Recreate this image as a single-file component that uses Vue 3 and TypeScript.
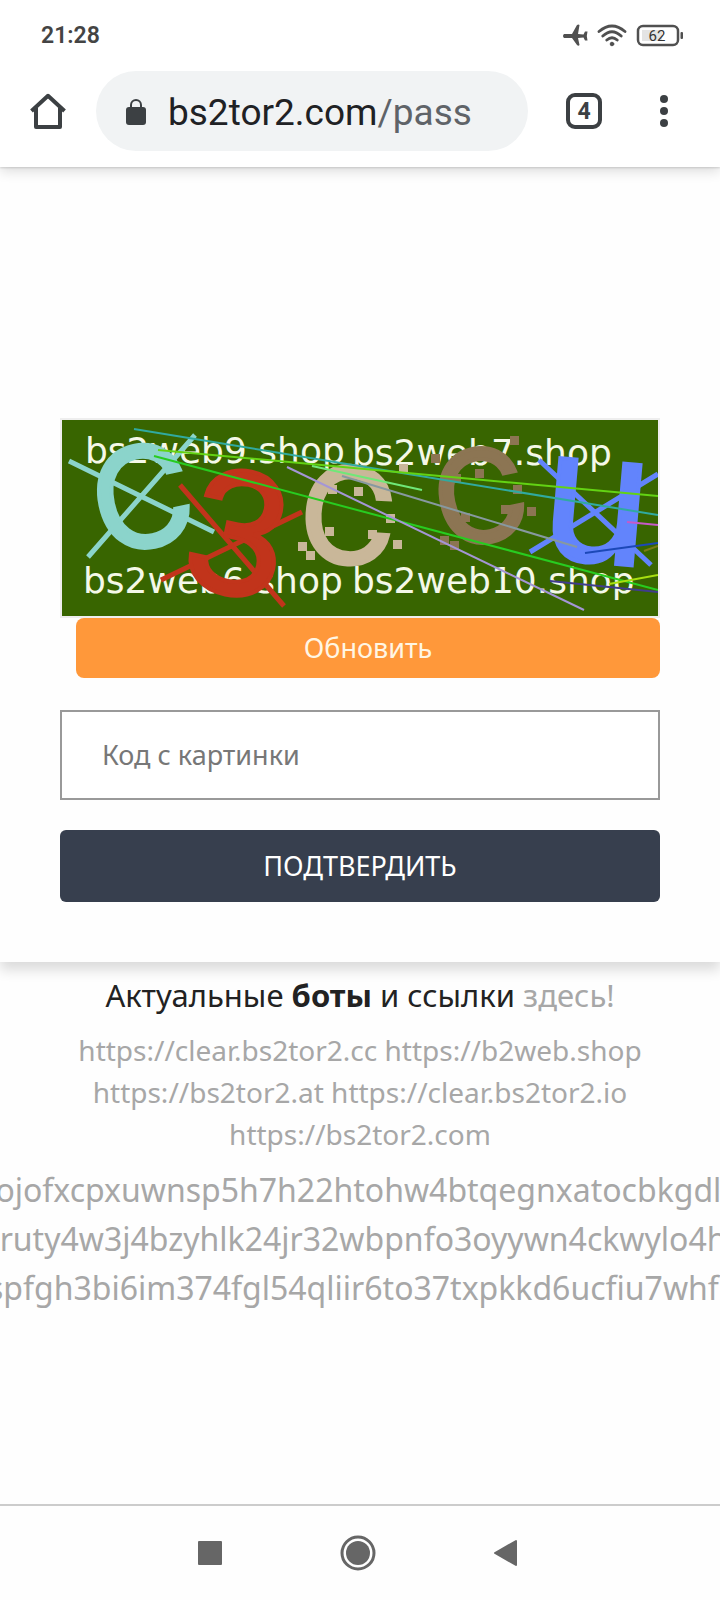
<script setup lang="ts">
import { ref } from 'vue'

interface Segment {
  from: [number, number]
  to: [number, number]
  color: string
}

const code = ref('')

const mirrors: string[] = [
  'https://clear.bs2tor2.cc',
  'https://b2web.shop',
  'https://bs2tor2.at',
  'https://clear.bs2tor2.io',
  'https://bs2tor2.com',
]

const onions: string[] = [
  'lojofxcpxuwnsp5h7h22htohw4btqegnxatocbkgdlt',
  'oruty4w3j4bzyhlk24jr32wbpnfo3oyywn4ckwylo4hr',
  'spfgh3bi6im374fgl54qliir6to37txpkkd6ucfiu7whfr',
]

const noise: Segment[] = [
  { from: [72, 9], to: [596, 95], color: '#30aaa0' },
  { from: [96, 30], to: [596, 76], color: '#63d313' },
  { from: [92, 36], to: [596, 170], color: '#28cc20' },
  { from: [250, 46], to: [360, 70], color: '#6fe878' },
  { from: [225, 47], to: [522, 190], color: '#a496d6' },
  { from: [280, 56], to: [515, 127], color: '#8799a0' },
  { from: [565, 102], to: [596, 105], color: '#c65ac8' },
  { from: [523, 133], to: [596, 123], color: '#1c48b8' },
  { from: [582, 131], to: [596, 126], color: '#7c7a14' },
  { from: [547, 164], to: [596, 155], color: '#a8e010' },
  { from: [488, 161], to: [596, 172], color: '#403c8c' },
]

const tanSpecks: [number, number][] = [
  [270, 69], [296, 71], [341, 48], [328, 98], [267, 111],
  [310, 114], [335, 124], [240, 126], [248, 135],
]
const brownSpecks: [number, number][] = [
  [452, 20], [373, 38], [394, 58], [417, 53], [455, 69],
  [443, 89], [469, 91], [403, 97], [382, 120], [392, 125],
]
</script>

<template>
  <div class="screen">
    <header class="browser">
      <div class="status">
        <time>21:28</time>
        <div class="indicators">
          <svg width="26" height="24" viewBox="0 0 26 24" aria-label="Авиарежим">
            <path d="M2 10H10L15 1Q16.500 0 17.500 1L16 10L21.500 10.500L23 7.500H25.500L24.800 12L25.500 16.500H23L21.500 13.500L16 14L17.500 21Q16.500 22.500 15 21L10 14H2Q0 12 2 10Z" fill="#505050" />
          </svg>
          <svg width="30" height="24" viewBox="0 0 30 24" fill="none" stroke="#505050" stroke-width="2.800" stroke-linecap="round" aria-label="Wi-Fi">
            <path d="M2 7.500Q15 -3.500 28 7.500M5.800 12Q15 3.500 24.200 12M9.800 16Q15 11.500 20.200 16" />
            <circle cx="15" cy="20" r="1.800" fill="#505050" stroke-width="1" />
          </svg>
          <svg width="48" height="24" viewBox="0 0 48 24" aria-label="Батарея">
            <rect x="2" y="2" width="40" height="19" rx="5" fill="#fff" stroke="#505050" stroke-width="2.500" />
            <rect x="6" y="6" width="20" height="11" fill="#e4e4e4" />
            <rect x="44.500" y="8" width="2.500" height="7" rx="1" fill="#505050" />
            <text x="21" y="17" text-anchor="middle" font-family="Roboto, sans-serif" font-size="15" font-weight="400" fill="#333">62</text>
          </svg>
        </div>
      </div>
      <div class="toolbar">
        <button class="tool home" type="button" aria-label="Домой">
          <svg width="40" height="40" viewBox="0 0 40 40" fill="none" stroke="#3c4043" stroke-width="4" stroke-linejoin="round">
            <path d="M3.500 20L20 4.800L36.500 20" />
            <path d="M8 17V36H32V17" />
          </svg>
        </button>
        <a class="address" href="#">
          <svg width="20" height="28" viewBox="0 0 20 28">
            <rect y="9" width="20" height="18" rx="3" fill="#3c4043" />
            <path d="M5 10V7A5 5 0 0 1 15 7V10" fill="none" stroke="#3c4043" stroke-width="2" />
          </svg>
          <span class="url">bs2tor2.com<span class="path">/pass</span></span>
        </a>
        <button class="tool tabs" type="button" aria-label="Вкладки"><span class="count">4</span></button>
        <button class="tool menu" type="button" aria-label="Меню">
          <svg width="8" height="32" viewBox="0 0 8 32" fill="#3c4043">
            <circle cx="4" cy="4" r="4" /><circle cx="4" cy="16" r="4" /><circle cx="4" cy="28" r="4" />
          </svg>
        </button>
      </div>
    </header>

    <main>
      <form class="card" @submit.prevent>
        <svg class="captcha" viewBox="0 0 596 196" role="img" aria-label="Картинка с кодом">
          <rect width="596" height="196" fill="#386500" />
          <g class="stamp">
            <text x="23" y="43">bs2web9.shop</text>
            <text x="290" y="45">bs2web7.shop</text>
            <text x="21" y="173">bs2web6.shop</text>
            <text x="290" y="173">bs2web10.shop</text>
          </g>
          <path d="M7 41L152 112M133 15L26 137" stroke="#8bd4cb" stroke-width="5" />
          <path d="M118 65L222 186M99 160L240 92" stroke="#c1341b" stroke-width="5" />
          <path d="M477 40L589 145M468 132L596 54" stroke="#6284fc" stroke-width="5" />
          <g class="sign">
            <text transform="translate(80 77) rotate(-12)" y="50" font-size="138" fill="#8bd4cb" stroke="#8bd4cb">C</text>
            <text transform="translate(176 113) rotate(12)" y="61" font-size="168" fill="#c1341b" stroke="#c1341b">3</text>
            <text transform="translate(286 95) rotate(3)" y="48" font-size="132" fill="#c9b799" stroke="#c9b799">C</text>
            <text transform="translate(418 76) rotate(-12)" y="46" font-size="127" fill="#8c7553" stroke="#8c7553">C</text>
            <text transform="translate(534 92) rotate(5)" y="50" font-size="184" fill="#6284fc" stroke="#6284fc">u</text>
          </g>
          <rect v-for="([x, y], i) in tanSpecks" :key="'t' + i" :x="x - 4" :y="y - 4" width="9" height="9" fill="#c9b799" />
          <rect v-for="([x, y], i) in brownSpecks" :key="'b' + i" :x="x - 4" :y="y - 4" width="9" height="9" fill="#8c7553" />
          <line
            v-for="(s, i) in noise"
            :key="'n' + i"
            :x1="s.from[0]"
            :y1="s.from[1]"
            :x2="s.to[0]"
            :y2="s.to[1]"
            :stroke="s.color"
            stroke-width="2"
          />
        </svg>
        <button class="refresh" type="button">Обновить</button>
        <input v-model="code" class="code" type="text" placeholder="Код с картинки" aria-label="Код с картинки" autocomplete="off" />
        <button class="submit" type="submit">ПОДТВЕРДИТЬ</button>
      </form>

      <section class="links">
        <h1>Актуальные <b>боты</b> и ссылки <a href="#">здесь!</a></h1>
        <p class="mirrors">
          <template v-for="m in mirrors" :key="m"><a :href="m">{{ m }}</a>{{ ' ' }}</template>
        </p>
        <div class="onions">
          <a v-for="o in onions" :key="o" href="#">{{ o }}</a>
        </div>
      </section>
    </main>

    <nav class="system">
      <button type="button" aria-label="Недавние">
        <svg width="36" height="36" viewBox="0 0 36 36"><rect x="6" y="6" width="24" height="24" rx="1" fill="#666" /></svg>
      </button>
      <button type="button" aria-label="Главный экран">
        <svg width="36" height="36" viewBox="0 0 36 36">
          <circle cx="18" cy="18" r="16" fill="none" stroke="#666" stroke-width="3" />
          <circle cx="18" cy="18" r="12" fill="#666" />
        </svg>
      </button>
      <button type="button" aria-label="Назад">
        <svg width="36" height="36" viewBox="0 0 36 36">
          <path d="M7 18L28 6V30Z" fill="#666" stroke="#666" stroke-width="2" stroke-linejoin="round" />
        </svg>
      </button>
    </nav>
  </div>
</template>

<style>
body {
  background: #fefefe;
}
</style>

<style scoped>
.screen {
  display: flex;
  flex-direction: column;
  min-height: 100vh;
  overflow: hidden;
  background: #fefefe;
  font-family: "Noto Sans", "Open Sans", sans-serif;
}
.screen * {
  box-sizing: border-box;
}
button {
  padding: 0;
  border: 0;
  background: none;
  font-family: inherit;
}
a {
  color: #a7a7a7;
  text-decoration: none;
}
svg {
  display: block;
}
.browser {
  position: relative;
  z-index: 1;
  padding-bottom: 16px;
  background: #fff;
  box-shadow: 0 1px 2px rgba(0, 0, 0, 0.14), 0 4px 12px rgba(0, 0, 0, 0.14);
  font-family: Roboto, sans-serif;
}
.status {
  display: flex;
  align-items: center;
  justify-content: space-between;
  height: 71px;
  padding: 0 36px 0 41px;
  color: #444;
  font-size: 23px;
  font-weight: 600;
}
.indicators {
  display: flex;
  gap: 9px;
}
.toolbar {
  display: flex;
  align-items: center;
  padding-right: 32px;
}
.tool {
  display: flex;
  align-items: center;
  justify-content: center;
  height: 80px;
}
.home {
  width: 96px;
}
.tabs {
  width: 112px;
}
.menu {
  width: 48px;
}
.count {
  width: 36px;
  height: 36px;
  border: 4px solid #3c4043;
  border-radius: 9px;
  color: #3c4043;
  font: 700 23px/30px Roboto, sans-serif;
}
.address {
  display: flex;
  flex: 1;
  align-items: center;
  gap: 22px;
  min-width: 0;
  height: 80px;
  padding: 2px 30px 0;
  border-radius: 40px;
  background: #f1f3f4;
  color: #202124;
  font-size: 37px;
}
.path {
  color: #5f6368;
}
.card {
  display: flex;
  flex-direction: column;
  padding: 251px 60px 60px;
  background: #fefefe;
  box-shadow: 0 8px 12px rgba(0, 0, 0, 0.14);
}
.captcha {
  width: 100%;
  border: 2px solid #eee;
}
.stamp {
  fill: #f4f8e8;
  font-family: "DejaVu Sans", sans-serif;
  font-size: 36px;
}
.sign {
  font-family: Inter, "DejaVu Sans", sans-serif;
  stroke-width: 4px;
  text-anchor: middle;
}
.refresh {
  height: 60px;
  margin: 0 0 32px 16px;
  padding-bottom: 2px;
  border-radius: 8px;
  background: #ff983a;
  color: #fff6e4;
  font-size: 27px;
}
.code {
  height: 90px;
  margin: 0 0 30px;
  padding: 0 40px 2px;
  border: 2px solid #999;
  border-radius: 0;
  background: #fff;
  color: #222;
  font-family: inherit;
  font-size: 27px;
}
.code::placeholder {
  color: #777;
  opacity: 1;
}
.submit {
  height: 72px;
  padding-bottom: 2px;
  border-radius: 6px;
  background: #373f4e;
  color: #fff;
  font-size: 27px;
}
.links {
  padding-top: 9px;
  text-align: center;
}
h1 {
  margin: 0;
  color: #222;
  font-size: 31px;
  font-weight: 400;
  line-height: 48px;
}
.mirrors {
  margin: 10px 0;
  padding: 0 70px;
  color: #a7a7a7;
  font-size: 28px;
  line-height: 42px;
}
.onions {
  display: flex;
  flex-direction: column;
  align-items: center;
  font-size: 32px;
  line-height: 49px;
  white-space: nowrap;
}
.system {
  display: flex;
  justify-content: center;
  margin-top: auto;
  padding-right: 4px;
  border-top: 2px solid #ccc;
}
.system button {
  display: flex;
  align-items: center;
  justify-content: center;
  width: 148px;
  height: 94px;
}
</style>
